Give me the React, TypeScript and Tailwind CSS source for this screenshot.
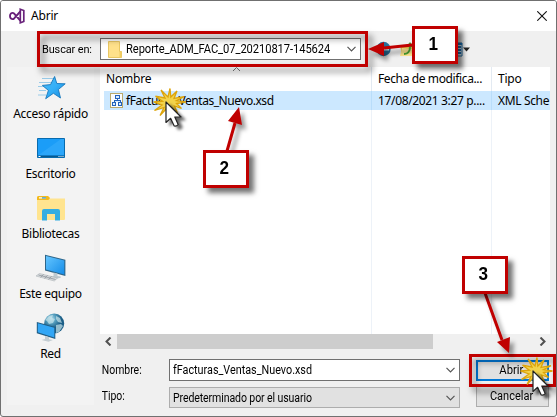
import React from "react";

const ui = "font-['Noto_Sans','Open_Sans',sans-serif]";
const gdi = "font-['Roboto','Liberation_Sans',sans-serif]";

function Chevron() {
  return (
    <svg width="9" height="6" viewBox="0 0 9 6" fill="none" stroke="#555" strokeWidth="1.2">
      <path d="M.5 .8 4.5 4.8 8.5 .8" />
    </svg>
  );
}

function StudioLogo() {
  return (
    <svg className="h-4 w-4" viewBox="0 0 16 16" fill="none" stroke="#68217a" strokeWidth="1.9">
      <path d="M11.3 1.2 14.8 2.5V13.5L11.3 14.8V1.2Z" strokeWidth="1.7" />
      <path d="M11.3 3.5 5.4 10.2Q3.6 11.8 2 10.6 1 9.7 1 8T2 5.4Q3.6 4.2 5.4 5.8L11.3 12.5" />
    </svg>
  );
}

function StarIcon() {
  return (
    <svg width="30" height="26" viewBox="0 0 30 26">
      <defs>
        <linearGradient id="star" x1="0" y1="0" x2="1" y2="1">
          <stop stopColor="#4db8f2" /><stop offset=".5" stopColor="#35b0f8" /><stop offset="1" stopColor="#1689dc" />
        </linearGradient>
      </defs>
      <path d="M6 3.5h11M3 7.5h12M2 11.5h9M3 15.5h7M2 20h8" stroke="#9acbe8" strokeWidth="1" />
      <path d="m18.6 1.5 2.2 7 8.4.3-6.8 5.7 2.1 8.5-7.1-4.7-7.7 5.4 2.7-8.3-6-5 8.1-.8Z" fill="url(#star)" stroke="#1677bc" strokeWidth=".9" />
    </svg>
  );
}

function DesktopIcon() {
  return (
    <svg width="28" height="20" viewBox="0 0 28 20">
      <path d="M.5.5h27v19H.5Z" fill="#1b9df8" stroke="#086bae" />
      <path d="M1 17.5 24 1h3v16H1Z" fill="#39adfc" opacity=".55" />
      <path d="M1 18.3h26" stroke="#07598f" strokeWidth="1.5" />
      <path d="M1.5 18.5h2m18 0h1m1 0h1m1 0h1" stroke="#fff" />
    </svg>
  );
}

function LibraryIcon() {
  return (
    <svg width="28" height="25" viewBox="0 0 28 25">
      <path d="M0 1.5Q0 0 1.5 0H11l2 2.5h15V23q0 1-1 1H1q-1 0-1-1Z" fill="#ffe48f" />
      <path d="M0 1.5Q0 0 1.5 0H11l2 2-1.5 2H0Z" fill="#f3b91c" />
      <path d="M2 1.3h7v1.3H2Z" fill="#fff" /><path d="M5 1.3h4v1.3H5Z" fill="#3898cd" />
      <path d="M5 24.5V15q0-2 2-2h14q2 0 2 2v9.5h-5V18h-8v6.5Z" fill="#34aee2" />
    </svg>
  );
}

function ComputerIcon() {
  return (
    <svg width="32" height="28" viewBox="0 0 32 28">
      <defs><linearGradient id="pc" x1="0" y1="0" x2="1" y2="1"><stop stopColor="#64c5ff" /><stop offset="1" stopColor="#148ce8" /></linearGradient></defs>
      <path d="m10 .7 20.4 5V22L10 16.4Z" fill="#2d6589" />
      <path d="m11 2 18.3 4.5v14L11 15.4Z" fill="url(#pc)" />
      <path d="m18.5 18.6 4 1v2.5l3.2.4v1.3l-4.5 1-6.5-2 3.8-.8Z" fill="#bdc9d0" />
      <path d="m4.5 19.5 18 4.5-3.2 3L1 22Z" fill="#d7dadd" stroke="#aeb5b9" strokeWidth=".6" />
      <path d="m3.5 21 17 4.5m-12-5-3 2.8m7-1.8-3 2.8m7-1.8-3 2.8" stroke="#858d93" strokeWidth=".7" />
    </svg>
  );
}

function NetworkIcon() {
  return (
    <svg width="30" height="30" viewBox="0 0 30 30">
      <defs><radialGradient id="globe" cx=".35" cy=".25"><stop stopColor="#b6dded" /><stop offset=".45" stopColor="#59a2c1" /><stop offset="1" stopColor="#1c5f87" /></radialGradient></defs>
      <circle cx="18.2" cy="10.5" r="10" fill="url(#globe)" />
      <path d="m9 7 4-4 4-1-1 3 3 1-2 4-4 1-2-3Zm11-4 4 2 2 5-4-1-2-3Zm0 9 5-1 2 2-4 6-3 1Z" fill="#c7e4ea" opacity=".7" />
      <path d="m.8 9 18.5 5v12L.8 20.2Z" fill="#205c83" />
      <path d="m1.8 10.2 16.5 4.6v9.8L1.8 19.3Z" fill="#32a6f5" />
      <path d="m9 23 4 1.2v2l4 .8-4.5 1.7L5.5 27 9 26Z" fill="#c4cdd2" />
    </svg>
  );
}

function SchemaIcon() {
  return (
    <svg width="13" height="15" viewBox="0 0 13 15" shapeRendering="crispEdges">
      <path d="M.5.5h12v14H.5Z" fill="#f9fcff" stroke="#bba96c" />
      <path d="M5 2.5h4v3H5ZM2.5 9.5h3v3h-3ZM8 9.5h3v3H8ZM7 6v2M4 9V7.5h6V9" fill="#d6ebff" stroke="#2462ba" />
    </svg>
  );
}

function Place({ icon, name }: { icon: React.ReactNode; name: string }) {
  return (
    <div className="flex h-[60px] flex-col items-center">
      <div className="flex h-[34px] items-center justify-center">{icon}</div>
      <span className="whitespace-nowrap text-[12px] leading-[18px] tracking-[-0.3px]">{name}</span>
    </div>
  );
}

function ClickCursor({ place }: { place: string }) {
  return (
    <svg className={`absolute ${place}`} width="42" height="46" viewBox="0 0 42 46">
      <defs><filter id="cursorShadow" x="-50%" y="-50%" width="220%" height="220%"><feDropShadow dx="4" dy="3" stdDeviation="1.8" floodOpacity=".6" /></filter></defs>
      <path d="m15 11-4-8 7 7 2-8.5.8 8.5 6.2-6-3 7.5 10-1.8-7.5 4 9 1.3-9 1.5 5 5-7-2.5 3 7-6-5-2.5 8-2-8-7 7.5 4-8-9.5 3 7.5-5.5L3.500 15l9-.8-7-5Z" fill="#f2d34c" stroke="#dda40a" strokeWidth="1.3" />
      <path d="M16 15v20.500l4.600-4.200 3.600 7.700q2.400.6 4-1.500L24.800 30h6.200Z" fill="#fff" stroke="#222" strokeWidth="1.2" strokeLinejoin="round" filter="url(#cursorShadow)" />
    </svg>
  );
}

function Callout({ n, place }: { n: number; place: string }) {
  return (
    <div className={`absolute flex h-[38px] w-[46px] items-center justify-center border-[3px] border-[#c00000] bg-white pb-0.5 pr-1 font-['Liberation_Sans',sans-serif] text-[19px] font-bold shadow-[5px_5px_5px_rgba(0,0,0,0.55)] ${place}`}>
      <span className="inline-block scale-x-90">{n}</span>
    </div>
  );
}

export default function App() {
  return (
    <div className={`relative flex h-[417px] w-[557px] flex-col overflow-hidden rounded-[3px] border border-[#707070] bg-[#f0f0f0] text-black ${ui}`}>
      <header className="flex h-[30px] shrink-0 items-center bg-white pl-2 pr-[9px]">
        <StudioLogo />
        <h1 className="ml-[6px] text-[12px] leading-4 tracking-[-0.2px]">Abrir</h1>
        <svg className="ml-auto" width="10" height="10" viewBox="0 0 10 10" stroke="#111" strokeWidth="1.1"><path d="m.3.3 9.4 9.4m0-9.4L.3 9.7" /></svg>
      </header>
      <div className="flex h-9 shrink-0 items-start pt-[7px]">
        <span className={`ml-[41px] mt-[3px] w-[58px] origin-left scale-x-95 whitespace-nowrap text-[11.5px] leading-4 tracking-[-0.12px] ${gdi}`}>Buscar en:</span>
        <div className="flex h-[22px] w-[261px] items-center border border-[#707070] bg-white pl-[7px] pr-1">
          <svg width="14" height="17" viewBox="0 0 14 17"><path d="M.5.5h11v10h2v6H.5Z" fill="#ffe18a" stroke="#e9c763" /><path d="M11.5 10.5h2v6h-2Z" fill="#f2cd62" /></svg>
          <span className={`ml-[4px] w-[219px] origin-left scale-x-[0.93] whitespace-nowrap text-[12px] leading-4 tracking-[-0.08px] ${gdi}`}>Reporte_ADM_FAC_07_20210817-145624</span>
          <span className="ml-auto"><Chevron /></span>
        </div>
        <div className="ml-[15px] mt-[3px] flex h-4 items-center">
          <svg width="15" height="16" viewBox="0 0 15 16"><circle cx="7.5" cy="8" r="7.2" fill="#28739e" /><path d="M8 3 3 8l5 5V9.5h5v-3H8Z" fill="#c9e3ef" /></svg>
          <svg className="ml-2" width="16" height="16" viewBox="0 0 16 16"><path d="M1 4h5l2 2h7v8l-12 1Z" fill="#e3bd45" /><path d="m3 7 12 1-2 7H1Z" fill="#ffe890" /><path d="M5 12q5 0 5-6H7l4-5 4 5h-3q0 7-7 8Z" fill="#49a333" /></svg>
          <svg className="ml-[33px]" width="22" height="15" viewBox="0 0 22 15"><path d="M1 1h13v13H1Z" fill="#e9f5fe" stroke="#236ca2" /><path d="M1 2h13M10 5h3m-3 3h3m-3 3h3" stroke="#1c79c3" strokeWidth="2" /><path d="M15 5.500h7l-3.500 4Z" fill="#222" /></svg>
        </div>
      </div>
      <div className="flex min-h-0 flex-1">
        <nav className="ml-1.5 h-[338px] w-[87px] shrink-0 bg-[#f3f3f3] pt-[4px]">
          <Place icon={<StarIcon />} name="Acceso rápido" />
          <Place icon={<DesktopIcon />} name="Escritorio" />
          <Place icon={<LibraryIcon />} name="Bibliotecas" />
          <Place icon={<ComputerIcon />} name="Este equipo" />
          <Place icon={<NetworkIcon />} name="Red" />
        </nav>
        <main className="ml-[6px] w-[456px]">
          <div className="flex h-[267px] w-[450px] flex-col bg-white text-[12px]">
            <div className="grid h-6 shrink-0 grid-cols-[272px_120px_58px] whitespace-nowrap leading-6">
              <div className="border-r border-[#e3eaf2] pl-[6px] tracking-[-0.2px]">Nombre</div>
              <div className="border-r border-[#e3eaf2] pl-[6px] tracking-[-0.38px]">Fecha de modifica...</div>
              <div className="pl-[6px] tracking-[-0.2px]">Tipo</div>
            </div>
            <div className="ml-1 grid h-[19px] shrink-0 grid-cols-[268px_120px_58px] whitespace-nowrap bg-[#cce8ff] leading-[19px]">
              <div className="flex items-center border-r border-[#b9ddfa] pl-[6px]"><SchemaIcon /><span className="ml-[3px] tracking-[-0.46px]">fFacturas_Ventas_Nuevo.xsd</span></div>
              <div className="border-r border-[#b9ddfa] pl-[6px] tracking-[-0.35px]">17/08/2021 3:27 p....</div>
              <div className="pl-[6px] tracking-[-0.35px]">XML Sche</div>
            </div>
            <div className="grid flex-1 grid-cols-[272px_120px_58px]"><div className="border-r border-[#edf2f8]" /><div className="border-r border-[#edf2f8]" /></div>
          </div>
          <div className="flex h-[15px] w-[450px] items-center">
            <svg className="ml-[5px]" width="7" height="9" viewBox="0 0 7 9" fill="none" stroke="#505050" strokeWidth="2"><path d="M5.5.5 1.5 4.5l4 4" /></svg>
            <div className="ml-[5px] h-[15px] w-[316px] bg-[#cdcdcd]" />
            <svg className="ml-auto mr-[4px]" width="7" height="9" viewBox="0 0 7 9" fill="none" stroke="#505050" strokeWidth="2"><path d="m1.5.5 4 4-4 4" /></svg>
          </div>
          <div className={`mt-[10px] grid grid-cols-[67px_291px_73px] grid-rows-[22px_21px] gap-y-1.5 text-[12px] ${gdi}`}>
            <label className="origin-left scale-x-[0.87] pl-[2px] leading-[22px]">Nombre:</label>
            <div className="ml-0.5 flex w-[291px] items-center border border-[#707070] bg-white pl-[3px] pr-1"><span className="origin-left scale-x-90">fFacturas_Ventas_Nuevo.xsd</span><span className="ml-auto"><Chevron /></span></div>
            <button className="ml-[18px] mt-px flex h-[21px] w-[73px] items-center justify-center border-2 border-[#0078d7] bg-[#e1e1e1] pr-[2px] text-[12.5px]"><span className="scale-x-90">Abrir</span></button>
            <label className="origin-left scale-x-[0.87] pl-[2px] leading-[19px]">Tipo:</label>
            <div className="ml-0.5 flex w-[291px] items-center border border-[#adadad] bg-[#e1e1e1] pl-[3px] pr-1"><span className="origin-left scale-x-[0.88] whitespace-nowrap tracking-[-0.12px]">Predeterminado por el usuario</span><span className="ml-auto"><Chevron /></span></div>
            <button className="-mt-px ml-[18px] flex h-[21px] w-[73px] items-center justify-center border border-[#adadad] bg-[#e1e1e1] pr-[2px] text-[12.5px]"><span className="scale-x-[0.88]">Cancelar</span></button>
          </div>
        </main>
      </div>

      <div className="pointer-events-none absolute -left-px -top-px h-[417px] w-[557px]">
        <svg className="absolute left-[232px] top-[66px]" width="9" height="6" viewBox="0 0 9 6" fill="none" stroke="#777"><path d="m1 5 3.5-3.5L8 5" /></svg>
        <div className="absolute left-[37px] top-[31px] h-9 w-[331px] border-[3px] border-[#c00000] drop-shadow-[4px_5px_3px_rgba(0,0,0,0.5)]" />
        <div className="absolute left-[469px] top-[354px] h-[33px] w-[87px] border-[3px] border-[#c00000] drop-shadow-[4px_5px_3px_rgba(0,0,0,0.5)]" />
        <svg className="absolute inset-0 drop-shadow-[4px_5px_2px_rgba(0,0,0,0.4)]" width="557" height="417" viewBox="0 0 557 417" fill="#c00000" stroke="#c00000">
          <path d="M412 45 384 48M227 151l8-28M485 293l17 47" strokeWidth="3" />
          <path d="m368 49 16-7v14ZM239 107l-11 14 14 4ZM509 353l-12-11 13-5Z" stroke="none" />
        </svg>
        <Callout n={1} place="left-[412px] top-[26px]" />
        <Callout n={2} place="left-[203px] top-[150px]" />
        <Callout n={3} place="left-[462px] top-[256px]" />
        <ClickCursor place="left-[150px] top-[87px]" />
        <ClickCursor place="left-[517px] top-[356px]" />
      </div>
    </div>
  );
}
